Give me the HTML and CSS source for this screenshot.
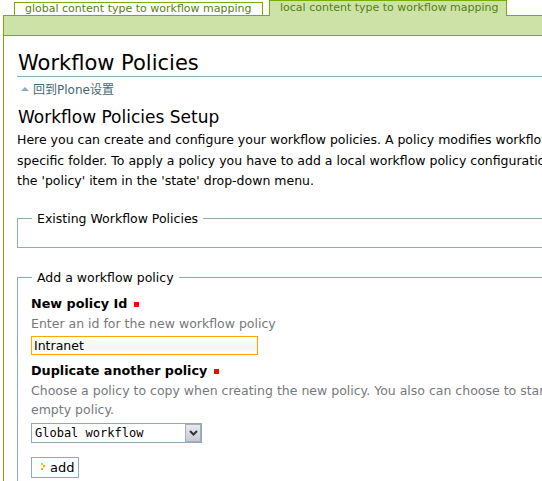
FILE: index.html
```html
<!DOCTYPE html>
<html>
<head>
<meta charset="utf-8">
<link rel="stylesheet" href="styles.css">
</head>
<body>
<div class="tabs">
  <a class="tab">global content type to workflow mapping</a>
  <a class="tab active">local content type to workflow mapping</a>
</div>
<div class="band"></div>
<div class="content">
  <h1 class="title">Workflow Policies</h1>
  <a class="uplink"><span class="uparrow"></span>回到Plone设置</a>
  <h2 class="subtitle">Workflow Policies Setup</h2>
  <p class="intro">Here you can create and configure your workflow policies. A policy modifies workflows for content types in a<br>specific folder. To apply a policy you have to add a local workflow policy configuration in a folder by choosing<br>the 'policy' item in the 'state' drop-down menu.</p>

  <fieldset class="box">
    <legend>Existing Workflow Policies</legend>
  </fieldset>

  <fieldset class="box add">
    <legend>Add a workflow policy</legend>
    <div class="field">
      <label class="label">New policy Id <span class="req"></span></label>
      <div class="help">Enter an id for the new workflow policy</div>
      <div class="input">Intranet</div>
    </div>
    <div class="field">
      <label class="label">Duplicate another policy <span class="req"></span></label>
      <div class="help">Choose a policy to copy when creating the new policy. You also can choose to start with an<br>empty policy.</div>
      <div class="select"><span class="sel-text">Global workflow</span><span class="sel-btn"><svg width="9" height="6" viewBox="0 0 9 6"><path d="M1 1 L4.5 4.5 L8 1" fill="none" stroke="#333" stroke-width="2"/></svg></span></div>
    </div>
    <div class="button"><svg class="arrow" width="6" height="8" viewBox="0 0 6 8"><rect x="0" y="0" width="2" height="2" fill="#ffb53c"/><rect x="2" y="2" width="2" height="2" fill="#f7a21b"/><rect x="0" y="5" width="2" height="2" fill="#f7a21b"/><rect x="2" y="4" width="1" height="1" fill="#ffd27a"/></svg>add</div>
  </fieldset>
</div>
</body>
</html>
```

FILE: styles.css
```css
html, body {
  margin: 0;
  padding: 0;
  overflow: hidden;
  background: #fff;
}
body {
  font-family: "DejaVu Sans", Verdana, sans-serif;
  font-size: 12px;
  color: #000;
  width: 1000px;
}
.tabs {
  display: flex;
  align-items: flex-end;
  height: 15px;
  padding-left: 14px;
  gap: 6px;
}
.tab {
  display: block;
  box-sizing: border-box;
  border: 1px solid #75ad0a;
  border-bottom: none;
  background: #fff;
  color: #578308;
  font-size: 11px;
  line-height: 12px;
  height: 13px;
  padding: 0 0 0 10px;
  width: 249px;
  white-space: nowrap;
}
.tab.active {
  background: #cde2a7;
  margin-bottom: -1px;
  position: relative;
  width: 238px;
  padding: 1px 0 0 10px;
  height: 16px;
}
.band {
  margin-left: 3px;
  height: 19px;
  border: 1px solid #75ad0a;
  border-right: none;
  background: #cde2a7;
}
.content {
  margin-left: 3px;
  border-left: 1px solid #75ad0a;
  padding: 14px 0 20px 13px;
}
.title {
  margin: 0;
  font-size: 21px;
  font-weight: normal;
  line-height: 26px;
  padding-left: 1px;
  border-bottom: 1px solid #8cacbb;
}
.uplink {
  display: flex;
  align-items: center;
  margin-top: 4px;
  padding-left: 4px;
  color: #436976;
  font-size: 12px;
  line-height: 18px;
  font-family: "DejaVu Sans", "Noto Sans CJK SC", sans-serif;
}
.uparrow {
  width: 0;
  height: 0;
  border-left: 4px solid transparent;
  border-right: 4px solid transparent;
  border-bottom: 4px solid #8cacbb;
  margin-right: 4px;
  margin-top: -2px;
}
.subtitle {
  margin: 7px 0 0 0;
  font-size: 17px;
  font-weight: normal;
  line-height: 22px;
  padding-left: 1px;
}
.intro {
  margin: 2px 0 0 0;
  font-size: 12.5px;
  line-height: 20.5px;
  white-space: nowrap;
}
.box {
  margin: 19px 0 0 0;
  border: 1px solid #8cacbb;
  padding: 0 0 0 13px;
  height: 35px;
  width: 760px;
}
.box legend {
  padding: 0 5px;
  margin-left: 1px;
  font-size: 12.5px;
  line-height: 16px;
}
.box.add {
  margin-top: 22px;
  height: auto;
  padding-bottom: 20px;
}
.field {
  margin-top: 4px;
}
.label {
  display: block;
  font-weight: bold;
  font-size: 12.75px;
  line-height: 20px;
  margin-top: 8px;
}
.field + .field .label {
  margin-top: 6px;
}
.req {
  display: inline-block;
  width: 5px;
  height: 5px;
  background: #ff0000;
  margin-left: 2px;
  vertical-align: 1px;
}
.help {
  color: #76797c;
  font-size: 12.5px;
  line-height: 19px;
  white-space: nowrap;
}
.input {
  box-sizing: border-box;
  margin-top: 3px;
  width: 227px;
  height: 19px;
  border: 1px solid #ffa500;
  background: linear-gradient(to bottom, #fff 0%, #f4f4f4 60%, #fff 100%);
  padding: 0 2px;
  font-size: 12.5px;
  line-height: 17px;
}
.select {
  box-sizing: border-box;
  display: flex;
  align-items: center;
  margin-top: 4px;
  width: 171px;
  height: 20px;
  border: 1px solid #8cacbb;
  background: #fff;
}
.sel-text {
  flex: 1;
  font-family: "DejaVu Sans Mono", monospace;
  font-size: 12px;
  padding-left: 3px;
}
.sel-btn {
  box-sizing: border-box;
  width: 16px;
  height: 18px;
  background: linear-gradient(to bottom, #e9e9f0, #c9c9d4);
  border: 1px solid #aab;
  display: flex;
  align-items: center;
  justify-content: center;
}
.button {
  box-sizing: border-box;
  display: inline-flex;
  align-items: center;
  margin-top: 14px;
  height: 21px;
  padding: 0 4px 0 9px;
  border: 1px solid #8cacbb;
  background: #fff;
  font-size: 13px;
  line-height: 17px;
}
.arrow {
  margin-right: 3px;
}
```
